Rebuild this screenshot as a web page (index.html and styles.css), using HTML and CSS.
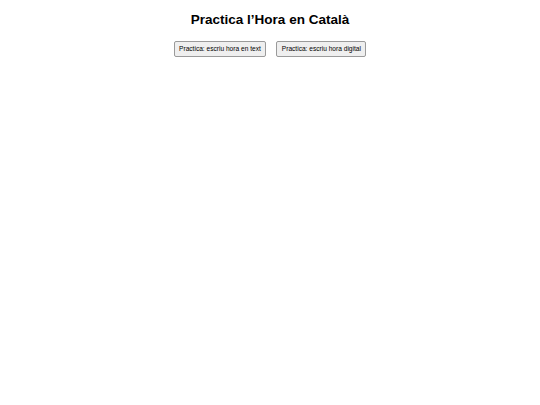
FILE: index.html
```html
<!DOCTYPE html>
<html lang="ca">
<head>
<meta charset="utf-8">
<title>Practica l’Hora en Català</title>
<link rel="stylesheet" href="styles.css">
</head>
<body>
<main class="page">
  <h1 class="title">Practica l’Hora en Català</h1>
  <div class="actions">
    <button class="btn" type="button">Practica: escriu hora en text</button>
    <button class="btn" type="button">Practica: escriu hora digital</button>
  </div>
</main>
</body>
</html>
```

FILE: styles.css
```css
html, body {
  margin: 0;
  padding: 0;
  background: #ffffff;
}
body {
  font-family: "Liberation Sans", Arial, sans-serif;
  color: #000;
}
.page {
  display: flex;
  flex-direction: column;
  align-items: center;
  padding-top: 12px;
}
.title {
  margin: 0;
  font-size: 13.5px;
  line-height: 16px;
  font-weight: bold;
}
.actions {
  display: flex;
  gap: 10px;
  margin-top: 13px;
}
.btn {
  font-family: "Liberation Sans", Arial, sans-serif;
  font-size: 6.6px;
  line-height: 8px;
  height: 16px;
  padding: 0 4.5px;
  margin: 0;
  color: #000;
  background: #efefef;
  border: 1px solid #9a9a9a;
  border-radius: 2px;
}
```
